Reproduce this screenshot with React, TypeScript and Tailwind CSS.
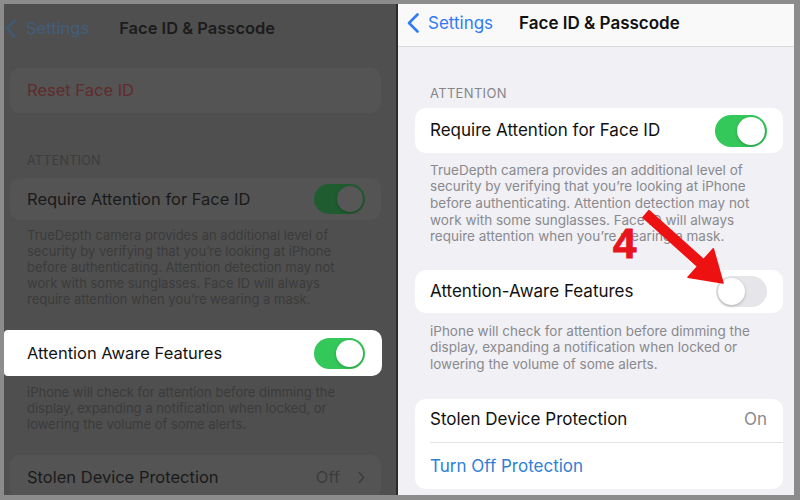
import React from "react";

const font = { fontFamily: "Inter, 'Noto Sans', sans-serif" };

function Chevron({ color, className }: { color: string; className?: string }) {
  return (
    <svg className={className} viewBox="0 0 12 20" fill="none">
      <polyline points="10.5,1.5 2,10 10.5,18.5" stroke={color} strokeWidth="2.6" strokeLinecap="round" strokeLinejoin="round" />
    </svg>
  );
}

function Toggle({ on, track, knob, className }: { on: boolean; track: string; knob: string; className?: string }) {
  return (
    <div className={`flex items-center rounded-full p-[2px] ${on ? "justify-end" : "justify-start"} ${track} ${className ?? ""}`}>
      <div className={`h-full aspect-square rounded-full shadow-[0_1px_3px_rgba(0,0,0,0.25)] ${knob}`} />
    </div>
  );
}

function LeftPanel() {
  return (
    <div className="flex h-full w-[392px] flex-col overflow-hidden bg-[#4f4f4f]" style={font}>
      <div className="flex h-[48px] shrink-0 items-center">
        <Chevron color="#415b76" className="ml-[1px] h-[19px] w-[11px]" />
        <span className="ml-[10px] text-[16.5px] leading-5 text-[#435d7c]">Settings</span>
        <span className="ml-[30px] text-[16.5px] font-semibold leading-5 text-[#1c1c1c]">Face ID &amp; Passcode</span>
      </div>
      <div className="ml-[6px] mt-[16px] flex h-[45px] w-[371px] shrink-0 items-center rounded-[10px] bg-[#545454] pl-[17px]">
        <span className="text-[16.5px] text-[#622a2d]">Reset Face ID</span>
      </div>
      <div className="mt-[40px] pl-[23px] text-[12.5px] leading-4 tracking-wide text-[#3c3c3c]">ATTENTION</div>
      <div className="ml-[6px] mt-[9px] flex h-[42px] w-[371px] shrink-0 items-center justify-between rounded-[10px] bg-[#545454] pl-[17px] pr-[16px]">
        <span className="text-[16.5px] text-[#1a1a1a]">Require Attention for Face ID</span>
        <Toggle on track="bg-[#1f5d30]" knob="bg-[#575757]" className="h-[30px] w-[51px]" />
      </div>
      <p className="mt-[7px] pl-[23px] pr-[50px] text-[13px] leading-4 text-[#3b3b3b]">
        TrueDepth camera provides an additional level of security by verifying that you’re looking at iPhone before authenticating. Attention detection may not work with some sunglasses. Face ID will always require attention when you’re wearing a mask.
      </p>
      <div className="mt-[23px] flex h-[46px] w-[378px] shrink-0 items-center justify-between rounded-r-[10px] rounded-l-[4px] bg-white pl-[23px] pr-[17px]">
        <span className="text-[16.5px] text-[#141414]">Attention Aware Features</span>
        <Toggle on track="bg-[#34c759]" knob="bg-white" className="h-[31px] w-[51px]" />
      </div>
      <p className="mt-[8px] pl-[23px] pr-[60px] text-[13px] leading-4 text-[#3b3b3b]">
        iPhone will check for attention before dimming the display, expanding a notification when locked, or lowering the volume of some alerts.
      </p>
      <div className="ml-[6px] mt-[23px] flex h-[44px] w-[371px] shrink-0 items-center justify-between rounded-[10px] bg-[#545454] pl-[17px] pr-[16px]">
        <span className="text-[16.5px] text-[#1a1a1a]">Stolen Device Protection</span>
        <div className="flex items-center gap-[18px]">
          <span className="text-[16.5px] text-[#3c3c3c]">Off</span>
          <svg viewBox="0 0 8 14" className="h-[13px] w-[7px]" fill="none">
            <polyline points="1.5,1.5 6.5,7 1.5,12.5" stroke="#3c3c3c" strokeWidth="1.8" strokeLinecap="round" strokeLinejoin="round" />
          </svg>
        </div>
      </div>
    </div>
  );
}

function RightPanel() {
  return (
    <div className="flex h-full w-[396px] flex-col overflow-hidden bg-[#f0f0f5]" style={font}>
      <div className="flex h-[43px] shrink-0 flex-col border-b border-[#dadadd] bg-[#f9f9f9] pt-[1px]">
        <div className="flex h-[36px] items-center">
          <Chevron color="#2f7cf6" className="ml-[9px] h-[20px] w-[12px]" />
          <span className="ml-[9px] text-[17px] leading-5 text-[#2f7cf6]">Settings</span>
          <span className="ml-[26px] text-[17px] font-semibold leading-5 text-[#111]">Face ID &amp; Passcode</span>
        </div>
      </div>
      <div className="mt-[38px] pl-[32px] text-[13px] leading-4 tracking-wide text-[#86868b]">ATTENTION</div>
      <div className="ml-[17px] mt-[7px] flex h-[45px] w-[368px] shrink-0 items-center justify-between rounded-[11px] bg-white pl-[15px] pr-[16px]">
        <span className="text-[17px] text-[#111]">Require Attention for Face ID</span>
        <Toggle on track="bg-[#34c759]" knob="bg-white" className="h-[32px] w-[52px]" />
      </div>
      <p className="mt-[8.5px] pl-[32px] pr-[40px] text-[13.5px] leading-[16.7px] text-[#8a8a8e]">
        TrueDepth camera provides an additional level of security by verifying that you’re looking at iPhone before authenticating. Attention detection may not work with some sunglasses. Face ID will always require attention when you’re wearing a mask.
      </p>
      <div className="ml-[17px] mt-[25px] flex h-[43px] w-[368px] shrink-0 items-center justify-between rounded-[11px] bg-white pl-[15px] pr-[16px]">
        <span className="text-[17px] text-[#111]">Attention-Aware Features</span>
        <Toggle on={false} track="bg-[#e6e6ea]" knob="bg-white" className="h-[31px] w-[51px]" />
      </div>
      <p className="mt-[9.5px] pl-[32px] pr-[40px] text-[13.5px] leading-[16.7px] text-[#8a8a8e]">
        iPhone will check for attention before dimming the display, expanding a notification when locked or lowering the volume of some alerts.
      </p>
      <div className="ml-[17px] mt-[26px] flex w-[368px] shrink-0 flex-col rounded-[11px] bg-white">
        <div className="ml-[15px] flex h-[44px] items-center justify-between border-b border-[#e3e3e6] pr-[16px]">
          <span className="text-[17px] text-[#111]">Stolen Device Protection</span>
          <span className="text-[17px] text-[#8a8a8e]">On</span>
        </div>
        <div className="flex h-[46px] items-center pl-[15px] pt-[2px]">
          <span className="text-[17px] text-[#2f80d6]">Turn Off Protection</span>
        </div>
      </div>
    </div>
  );
}

export default function App() {
  return (
    <div className="relative h-[500px] w-[800px] overflow-hidden bg-[#8c8c8c]">
      <div className="flex h-full pl-[4px] pr-[6px] pt-[4px] pb-[5px]">
        <LeftPanel />
        <div className="w-[2px] bg-[#2b2b2b]" />
        <RightPanel />
      </div>
      <svg className="pointer-events-none absolute inset-0" width="800" height="500" viewBox="0 0 800 500">
        <polygon
          points="649,210.6 703.6,259.6 713.3,248.8 723,283 688,277.2 697.6,266.4 643,217.4"
          fill="#ee1111"
          stroke="#ee1111"
          strokeWidth="1.5"
          strokeLinejoin="round"
        />
      </svg>
      <span
        className="pointer-events-none absolute left-[613px] top-[220px] text-[42px] font-bold leading-[48px] text-[#e8141c] [-webkit-text-stroke:1px_#e8141c]"
        style={{ fontFamily: "'Liberation Sans', Arial, sans-serif" }}
      >
        4
      </span>
    </div>
  );
}
